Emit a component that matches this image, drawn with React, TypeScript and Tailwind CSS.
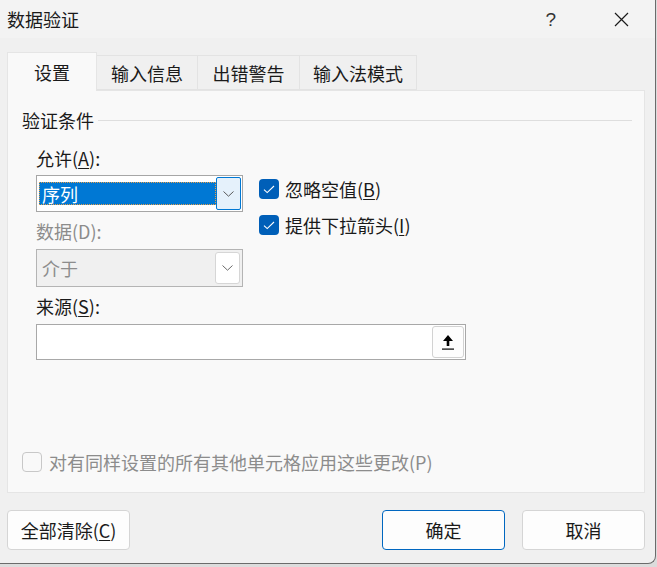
import type { ReactNode } from "react"

const FONT = { fontFamily: '"Noto Sans CJK SC", "Noto Sans", sans-serif' }

function Chevron({ color = "#5a5a5a" }: { color?: string }) {
  return (
    <svg width="11" height="6" viewBox="0 0 11 6" fill="none">
      <path d="M0.5 0.5 L5.5 5.2 L10.5 0.5" stroke={color} strokeWidth="1" />
    </svg>
  )
}

function Check() {
  return (
    <span className="flex h-[20px] w-[20px] shrink-0 items-center justify-center rounded-[4px] bg-[#005fb8]">
      <svg width="12" height="9" viewBox="0 0 12 9" fill="none">
        <path d="M1 4.6 L4.2 7.6 L11 1" stroke="#ffffff" strokeWidth="1.1" />
      </svg>
    </span>
  )
}

function Tab({ children, active, w }: { children: ReactNode; active?: boolean; w: string }) {
  if (active) {
    return (
      <div className={`relative z-10 -mb-px flex h-[39px] ${w} items-center justify-center border border-b-0 border-[#e5e5e5] bg-[#f9f9f9]`}>
        {children}
      </div>
    )
  }
  return (
    <div className={`mt-[3px] flex h-[35px] ${w} items-center justify-center border border-l-0 border-[#e3e3e3] bg-[#f0f0f0]`}>
      {children}
    </div>
  )
}

function Btn({ children, primary }: { children: ReactNode; primary?: boolean }) {
  return (
    <div
      className={`flex h-[40px] w-[123px] items-center justify-center rounded-[4px] border bg-[#fdfdfd] ${
        primary ? "border-[#0067c0]" : "border-[#d5d5d5]"
      }`}
    >
      {children}
    </div>
  )
}

export default function App() {
  return (
    <div className="h-[567px] w-[657px] overflow-hidden bg-[#dcdcdc] text-[18px] leading-none text-[#1a1a1a]" style={FONT}>
      <div className="flex h-[564px] w-[656px] flex-col rounded-br-[8px] border-b border-r border-[#6b6b6b] bg-[#f0f0f0]">
        {/* 标题栏 */}
        <div className="flex h-[38px] items-center bg-[#f3f3f3] pl-[7px]">
          <span>数据验证</span>
          <span className="ml-auto mr-[58px] text-[19px] font-light text-[#333]" style={{ fontFamily: '"Liberation Sans", sans-serif' }}>
            ?
          </span>
          <svg className="mr-[26px]" width="15" height="15" viewBox="0 0 15 15" fill="none">
            <path d="M1 1 L14 14 M14 1 L1 14" stroke="#1a1a1a" strokeWidth="1.2" />
          </svg>
        </div>

        {/* 选项卡 */}
        <div className="ml-[7px] mt-[14px] flex h-[38px] items-start">
          <Tab active w="w-[90px]">设置</Tab>
          <Tab w="w-[101px]">输入信息</Tab>
          <Tab w="w-[102px]">出错警告</Tab>
          <Tab w="w-[117px]">输入法模式</Tab>
        </div>

        {/* 面板 */}
        <div className="ml-[7px] flex h-[403px] w-[638px] flex-col border border-[#e5e5e5] bg-[#f9f9f9]">
          <div className="mt-[19px] flex h-[20px] items-center pl-[14px] pr-[12px]">
            <span>验证条件</span>
            <span className="ml-[4px] h-px flex-1 bg-[#dedede]" />
          </div>

          <div className="pl-[28px]">
            <div className="mt-[18px] flex h-[20px] items-center">
              允许(<span className="underline underline-offset-2">A</span>):
            </div>

            <div className="mt-[7px] flex">
              <div className="flex w-[207px] flex-col">
                <div className="flex h-[37px] border border-[#a6a6a6] bg-white p-px">
                  <div className="my-[5px] ml-px flex flex-1 items-center border border-dotted border-[#e6a04a] bg-[#0078d4] pl-[2px] text-white">
                    序列
                  </div>
                  <div className="flex w-[25px] items-center justify-center rounded-[2px] border border-[#0078d4] bg-[#e5f1fb]">
                    <Chevron />
                  </div>
                </div>

                <div className="mt-[9px] flex h-[20px] items-center text-[#8c8c8c]">数据(D):</div>

                <div className="mt-[8px] flex h-[38px] border border-[#b4b4b4] bg-[#f0f0f0] p-[2px] pl-px">
                  <div className="flex flex-1 items-center pl-[4px] text-[#8c8c8c]">介于</div>
                  <div className="flex w-[25px] items-center justify-center rounded-[3px] border border-[#d6d6d6] bg-white">
                    <Chevron color="#6a6a6a" />
                  </div>
                </div>
              </div>

              <div className="ml-[16px] mt-[4px] flex flex-col gap-[16px]">
                <div className="flex h-[20px] items-center gap-[6px]">
                  <Check />
                  <span>
                    忽略空值(<span className="underline underline-offset-2">B</span>)
                  </span>
                </div>
                <div className="flex h-[20px] items-center gap-[6px]">
                  <Check />
                  <span>
                    提供下拉箭头(<span className="underline underline-offset-2">I</span>)
                  </span>
                </div>
              </div>
            </div>

            <div className="mt-[9px] flex h-[20px] items-center">
              来源(<span className="underline underline-offset-2">S</span>):
            </div>

            <div className="mt-[8px] flex h-[36px] w-[430px] justify-end border border-[#a8a8a8] bg-white p-px">
              <div className="flex w-[32px] items-center justify-center rounded-[3px] border border-[#d2d2d2] bg-[#fdfdfd]">
                <svg width="14" height="17" viewBox="0 0 14 17">
                  <path d="M7 1 L12 7 L8.3 7 L8.3 12 L5.7 12 L5.7 7 L2 7 Z" fill="#000" />
                  <rect x="1" y="14.5" width="12" height="1.2" fill="#000" />
                </svg>
              </div>
            </div>
          </div>

          <div className="ml-[14px] mt-[92px] flex h-[20px] items-center gap-[7px] text-[#8c8c8c]">
            <span className="h-[20px] w-[20px] rounded-[4px] border border-[#c8c8c8] bg-[#f9f9f9]" />
            <span>对有同样设置的所有其他单元格应用这些更改(P)</span>
          </div>
        </div>

        {/* 按钮 */}
        <div className="ml-[7px] mt-[17px] flex w-[638px]">
          <Btn>
            全部清除(<span className="underline underline-offset-2">C</span>)
          </Btn>
          <div className="ml-auto flex gap-[17px]">
            <Btn primary>确定</Btn>
            <Btn>取消</Btn>
          </div>
        </div>
      </div>
    </div>
  )
}
